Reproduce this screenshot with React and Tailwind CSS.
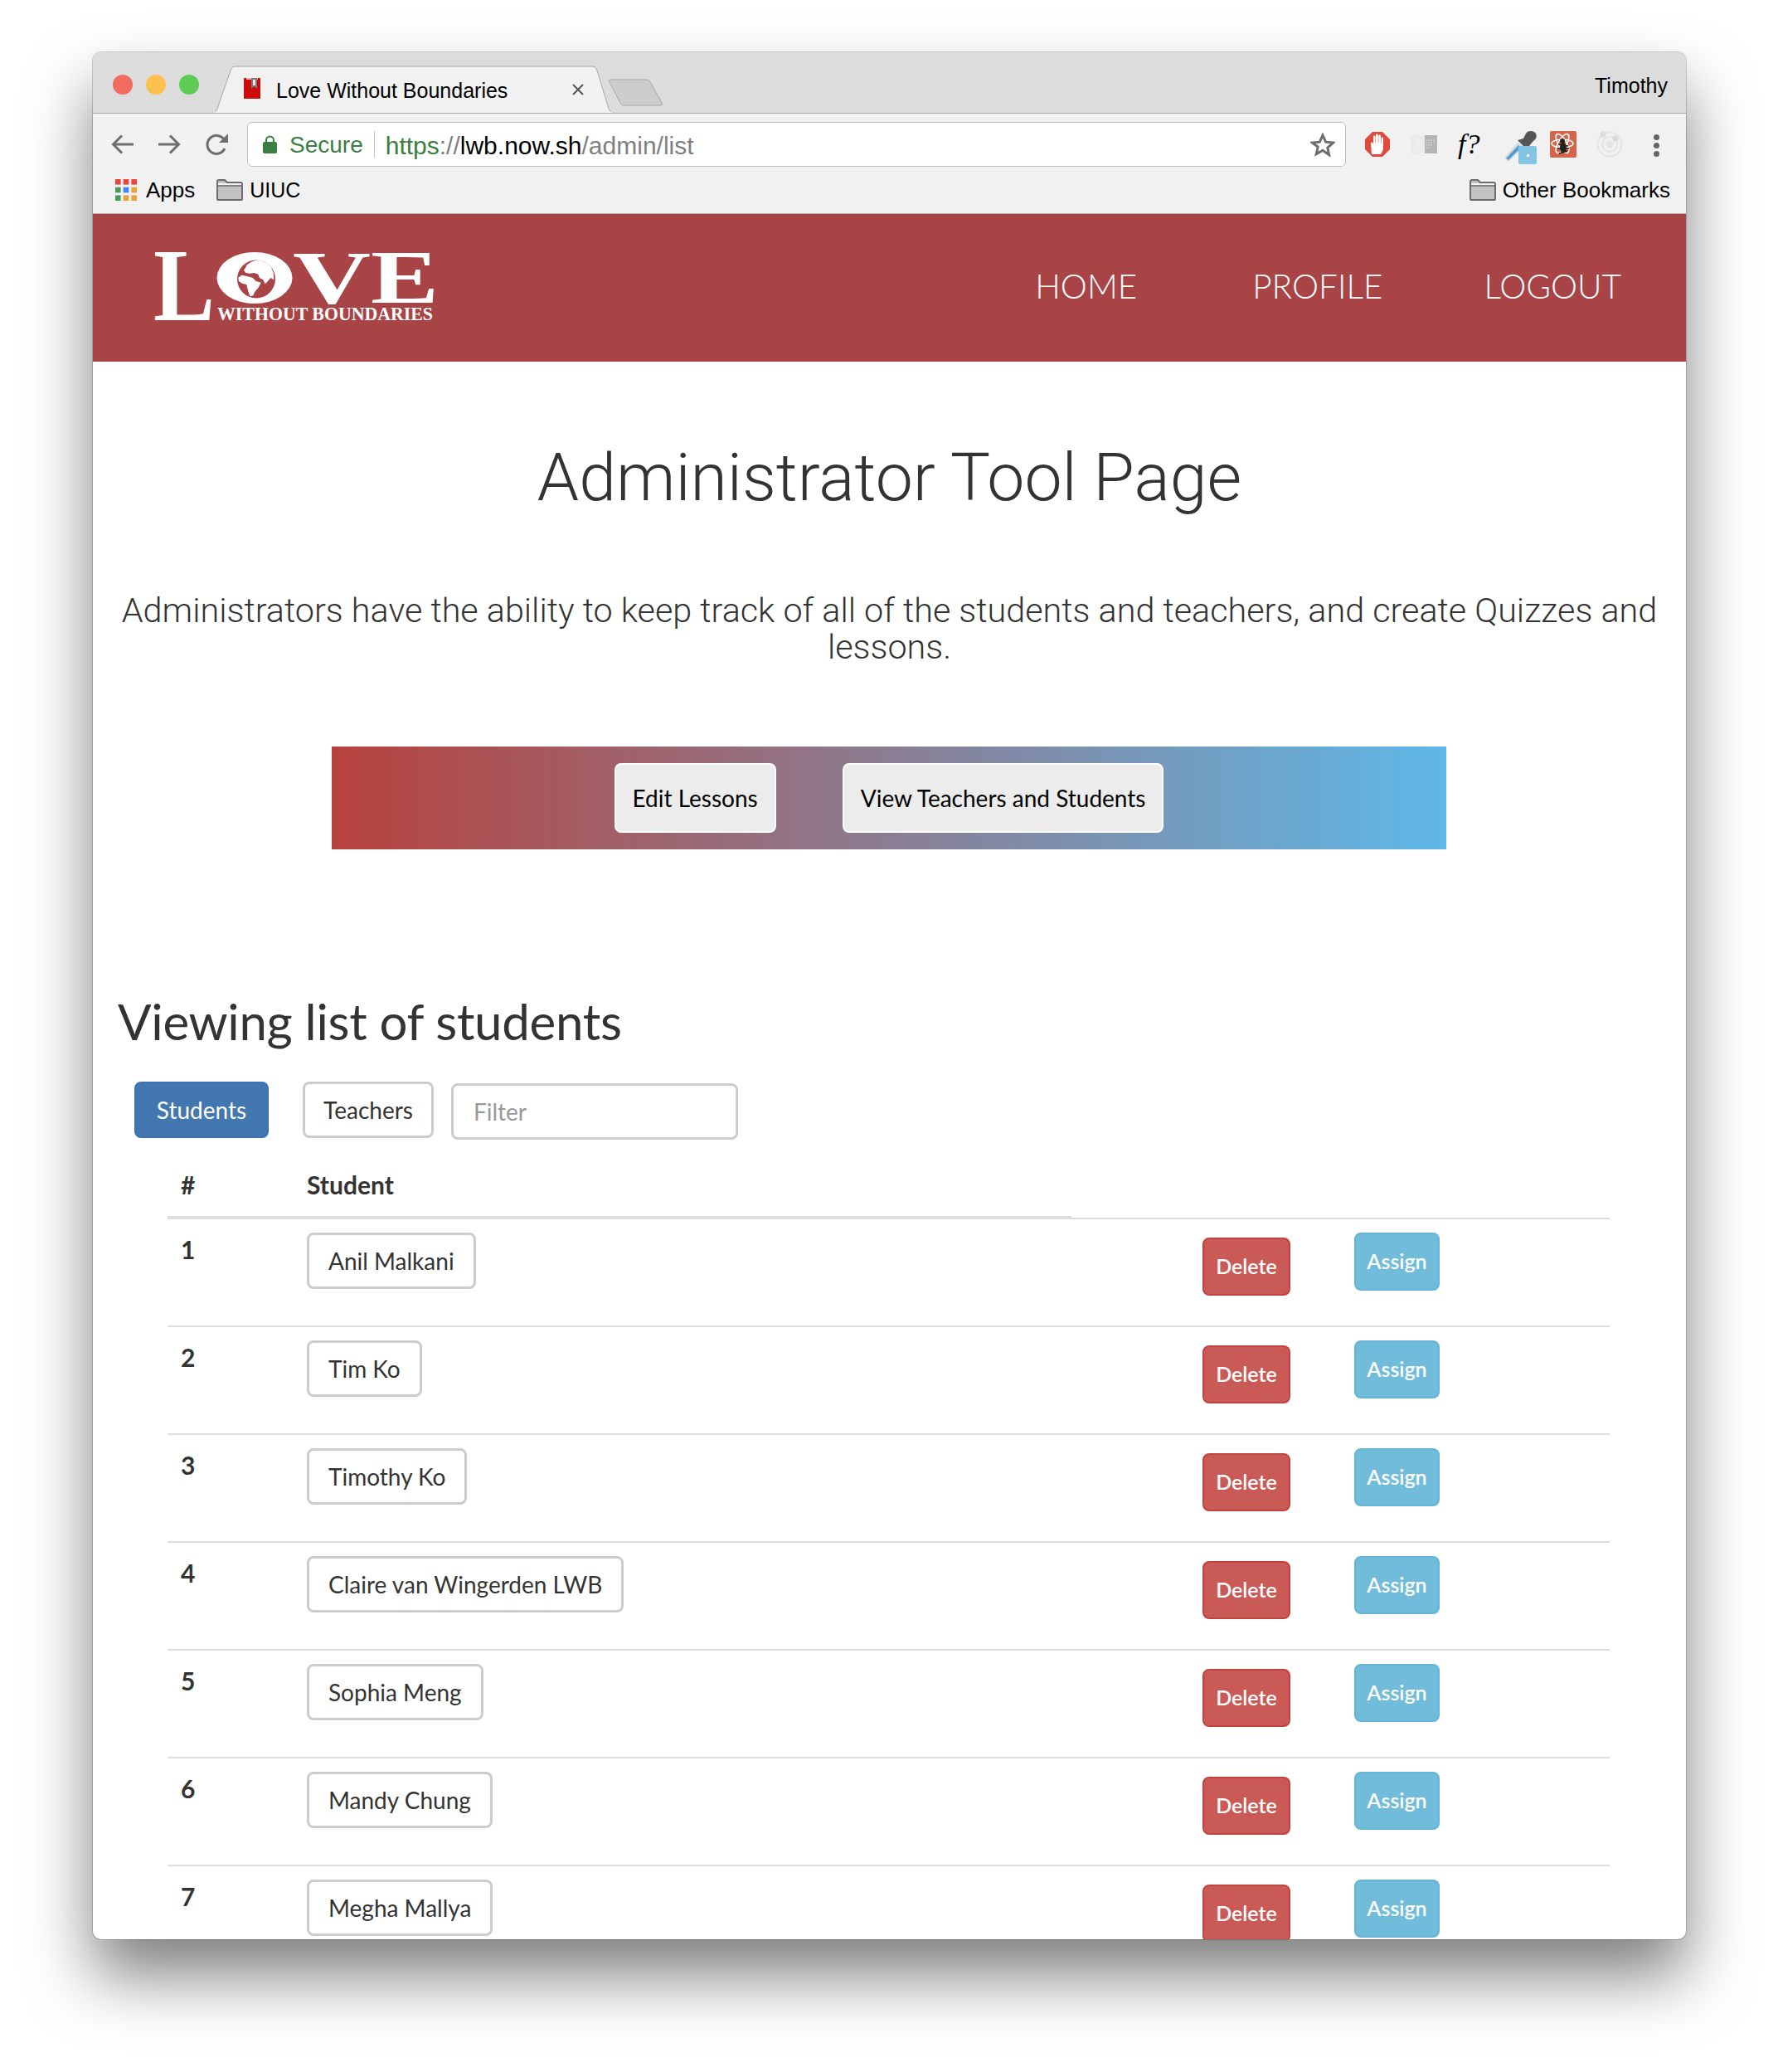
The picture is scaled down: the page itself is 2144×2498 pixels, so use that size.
import React from 'react';

const sans = "font-['Liberation_Sans',Arial,sans-serif]";

const students = [
    'Anil Malkani',
    'Tim Ko',
    'Timothy Ko',
    'Claire van Wingerden LWB',
    'Sophia Meng',
    'Mandy Chung',
    'Megha Mallya',
];

const FolderIcon = () => (
    <svg width="32" height="26" viewBox="0 0 32 26" className="shrink-0">
        <path d="M1 24V3a2 2 0 0 1 2-2h7l3 3h16a2 2 0 0 1 2 2v18a1 1 0 0 1-1 1H2a1 1 0 0 1-1-1z" fill="#c2c2c2" stroke="#6b6b6b" strokeWidth="2" />
        <path d="M1 8h30" stroke="#6b6b6b" strokeWidth="1.5" />
        <path d="M2 5h28v2H2z" fill="#f4f4f4" />
    </svg>
);

const AppsIcon = () => {
    const colors = ['#e8453c', '#e8453c', '#e8453c', '#4c9a5b', '#4285f4', '#e8a33d', '#4c9a5b', '#e8a33d', '#e8a33d'];
    return (
        <svg width="26" height="26" viewBox="0 0 26 26" className="shrink-0">
            {colors.map((c, i) => (
                <rect key={i} x={(i % 3) * 9.7} y={Math.floor(i / 3) * 9.7} width="6.6" height="6.6" fill={c} />
            ))}
        </svg>
    );
};

const AbpIcon = () => (
    <svg width="30" height="30" viewBox="0 0 30 30" className="shrink-0">
        <path d="M9 0h12l9 9v12l-9 9H9l-9-9V9z" fill="#e2483c" />
        <path d="M8 27l-1-13c0-2 2-2 2.500-.5L10 15V6c0-2 2.500-2 2.500 0v7h.5V4c0-2 2.800-2 2.800 0v9h.5V5c0-2 2.700-2 2.700 0v9h.5V8c0-2 2.500-2 2.500 0v11c0 4-2 6-3 8z" fill="#fff" />
    </svg>
);

const BinaryIcon = () => (
    <svg width="32" height="22" viewBox="0 0 32 22" className="shrink-0">
        <rect width="17" height="22" fill="#ebebeb" />
        <rect x="17" width="15" height="22" fill="#b4b4b4" />
        <path d="M6 6h9M6 9h9M6 12h9M6 15h7" stroke="#f8f8f8" strokeWidth="1" strokeDasharray="2 1" />
        <path d="M18 6h11M18 9h11M18 12h8M18 15h6" stroke="#d8d8d8" strokeWidth="1" strokeDasharray="2 1" />
    </svg>
);

const DropperIcon = () => (
    <svg width="40" height="40" viewBox="0 0 40 40" className="shrink-0">
        <path d="M1 32L18 13l6 6L6 37z" fill="#d8dce0" />
        <path d="M3 33L18 17l3 3L6 35z" fill="#4e9fd0" />
        <path d="M17 11l7-2 3-6c2-4 10-4 12 0 2 4 0 7-4 10l-4 5-1 6z" fill="#555" />
        <rect x="18" y="18" width="22" height="22" rx="2" fill="#84c4e4" />
        <rect x="28" y="28" width="3" height="3" fill="#fff" />
    </svg>
);

const ReactBugIcon = () => (
    <svg width="32" height="32" viewBox="0 0 32 32" className="shrink-0">
        <rect width="32" height="32" rx="2" fill="#d4654a" />
        <g fill="none" stroke="#fff" strokeWidth="1.500">
            <ellipse cx="15" cy="15" rx="13" ry="5" />
            <ellipse cx="15" cy="15" rx="13" ry="5" transform="rotate(60 15 15)" />
            <ellipse cx="15" cy="15" rx="13" ry="5" transform="rotate(120 15 15)" />
        </g>
        <circle cx="15" cy="12" r="3" fill="#222" />
        <ellipse cx="16" cy="20" rx="4" ry="6" fill="#222" />
        <path d="M10 16l12 2M9 21l14 0M11 27l10-3" stroke="#222" strokeWidth="1.500" />
    </svg>
);

const RingIcon = () => (
    <svg width="32" height="32" viewBox="0 0 32 32" className="shrink-0">
        <circle cx="16" cy="16" r="14.500" fill="none" stroke="#e4e4e4" strokeWidth="2" />
        <circle cx="16" cy="16" r="9" fill="none" stroke="#e4e4e4" strokeWidth="2" />
        <circle cx="16" cy="16" r="4.500" fill="#e4e4e4" />
        <circle cx="8" cy="4" r="3.500" fill="#dcdcdc" />
        <circle cx="23" cy="9" r="3.500" fill="#d8d8d8" />
    </svg>
);

const Logo = () => (
    <svg width="336" height="86" viewBox="0 0 336 86" className="shrink-0 overflow-visible">
        <defs>
            <clipPath id="globe"><circle cx="122" cy="32.500" r="23" /></clipPath>
        </defs>
        <g fill="#fff" fontFamily="'Liberation Serif', serif" fontWeight="700">
            <text x="-2" y="82" fontSize="124" textLength="74" lengthAdjust="spacingAndGlyphs">L</text>
            <text x="166" y="62" fontSize="92" textLength="94" lengthAdjust="spacingAndGlyphs">V</text>
            <text x="260" y="61" fontSize="90" textLength="82" lengthAdjust="spacingAndGlyphs">E</text>
            <text x="75" y="82" fontSize="23" textLength="260" lengthAdjust="spacingAndGlyphs">WITHOUT BOUNDARIES</text>
        </g>
        <ellipse cx="120" cy="31" rx="45.500" ry="31" fill="#fff" />
        <circle cx="122" cy="32.500" r="23" fill="#a84446" />
        <g clipPath="url(#globe)" fill="#fff">
            <path d="M111 15l5-3.300 8.300-2.700 8.400 2 6.600 5.700 3.400 8.300.6 8.300-4-2.300-3.300 4-3.300 3.300-2.400-5-4.300-2.300-1.700-4.300-5-1.700-5 .7-5-.7-2.300-3.300 2.300-3.400z" />
            <path d="M100.300 31l4-3.300 6.700 1.300 6.700 2 4 4 6 1.700-3.400 6.600-4 4.400-2 4.600-4 1-2.600-8.300-1.400-6-5.300-1.300-4-2.700z" />
        </g>
    </svg>
);

const App = () => {
    return (
        <div className="h-[2498px] w-full overflow-hidden bg-white pt-[63px] pl-[112px]">
            <div className="flex h-[2275px] w-[1921px] flex-col overflow-hidden rounded-[10px] bg-white shadow-[0_0_0_1px_rgba(0,0,0,0.18),0_44px_78px_rgba(0,0,0,0.5)]">
                {/* Tab strip */}
                <div className={`flex h-[74px] shrink-0 items-end border-b border-[#a8a8a8] bg-[#dcdcdc] ${sans}`}>
                    <div className="flex gap-[16px] self-start pt-[27px] pl-[24px]">
                        <span className="h-[24px] w-[24px] rounded-full bg-[#f26d60]" />
                        <span className="h-[24px] w-[24px] rounded-full bg-[#fbc04e]" />
                        <span className="h-[24px] w-[24px] rounded-full bg-[#5ecb55]" />
                    </div>
                    <div className="relative ml-[16px] flex h-[57px] w-[484px] items-center pl-[38px]">
                        <svg width="484" height="57" viewBox="0 0 484 57" className="absolute inset-0">
                            <path d="M0 57c3 0 5-2 6-5L22 6c1-3 3-5 6-5h430c3 0 5 2 6 5l14 46c1 3 3 5 6 5z" fill="#f1f1f1" stroke="#a8a8a8" strokeWidth="1" />
                            <path d="M1 57h482" stroke="#f1f1f1" strokeWidth="2" />
                        </svg>
                        <svg width="21" height="26" viewBox="0 0 21 26" className="relative mt-[-2px] shrink-0">
                            <rect width="20" height="25" rx="1" fill="#cc0c0c" />
                            <rect x="3" y="0" width="14" height="2" fill="#f0b0b0" />
                            <path d="M9 0h7v13l-3.500-3L9 13z" fill="#7a7a7a" />
                            <path d="M11 2h3v7h-3z" fill="#e8e8e8" />
                        </svg>
                        <span className="relative ml-[18px] mt-[4px] text-[25px] leading-none text-black">Love Without Boundaries</span>
                        <svg width="14" height="14" viewBox="0 0 14 14" className="relative ml-[78px] shrink-0">
                            <path d="M1 1l12 12M13 1L1 13" stroke="#555" strokeWidth="2" />
                        </svg>
                    </div>
                    <svg width="66" height="33" viewBox="0 0 66 33" className="mb-[8px] ml-[-6px] shrink-0">
                        <path d="M2 1h44c2 0 3 1 4 3l14 25c1 2 0 3-2 3H18c-2 0-3-1-4-3L1 4C0 2 0 1 2 1z" fill="#cdcdcd" stroke="#a6a6a6" strokeWidth="1" />
                    </svg>
                    <span className="mb-[20px] ml-auto pr-[22px] text-[25px] leading-none text-black">Timothy</span>
                </div>

                {/* Toolbar */}
                <div className={`flex h-[71px] shrink-0 items-start bg-[#f1f1f1] pt-[10px] pl-[22px] ${sans}`}>
                    <div className="mt-[15px] flex gap-[30px]">
                        <svg width="27" height="24" viewBox="0 0 27 24" fill="none" stroke="#6e6e6e" strokeWidth="3">
                            <path d="M27 12H3M13 1.500L2.500 12 13 22.500" />
                        </svg>
                        <svg width="27" height="24" viewBox="0 0 27 24" fill="none" stroke="#6e6e6e" strokeWidth="3">
                            <path d="M0 12h24M14 1.500L24.500 12 14 22.500" />
                        </svg>
                        <svg width="27" height="26" viewBox="0 0 27 26" fill="none" className="mt-[-1px]">
                            <path d="M23 18a11 11 0 1 1 -1-11" stroke="#6e6e6e" strokeWidth="3" />
                            <path d="M27 0v11H16z" fill="#6e6e6e" />
                        </svg>
                    </div>
                    <div className="ml-[23px] flex h-[54px] w-[1325px] shrink-0 items-center rounded-[6px] border border-[#bdbdbd] bg-white pl-[18px] pr-[12px] text-[28px]">
                        <svg width="17" height="22" viewBox="0 0 17 22" className="shrink-0">
                            <path d="M4 9V6a4.500 4.500 0 0 1 9 0v3" fill="none" stroke="#3a7e41" strokeWidth="2" />
                            <rect y="8" width="17" height="14" rx="2" fill="#3a7e41" />
                        </svg>
                        <span className="ml-[15px] pt-[2px] text-[#3a7e41]">Secure</span>
                        <span className="ml-[13px] h-[32px] w-px bg-[#c4c4c4]" />
                        <span className="ml-[13px] pt-[2px] text-[30px]">
                            <span className="text-[#3a7e41]">https</span>
                            <span className="text-[#808080]">://</span>
                            <span className="text-black">lwb.now.sh</span>
                            <span className="text-[#808080]">/admin/list</span>
                        </span>
                        <svg width="30" height="29" viewBox="0 0 30 29" className="ml-auto shrink-0">
                            <path d="M15 3l3.600 8.200 8.900.9-6.700 5.900 1.900 8.800L15 21.300 7.300 25.800l1.900-8.800L2.500 12.100l8.900-.9z" fill="none" stroke="#6e6e6e" strokeWidth="3" />
                        </svg>
                    </div>
                    <div className="mt-[12px] flex items-start">
                        <div className="ml-[23px]"><AbpIcon /></div>
                        <div className="ml-[25px] mt-[4px]"><BinaryIcon /></div>
                        <span className="ml-[25px] w-[32px] font-['Liberation_Serif',serif] text-[34px] leading-[30px] italic text-black">f?</span>
                        <div className="ml-[23px] mt-[-1px]"><DropperIcon /></div>
                        <div className="ml-[16px] mt-[-1px]"><ReactBugIcon /></div>
                        <div className="ml-[24px] mt-[-1px]"><RingIcon /></div>
                        <div className="ml-[37px] mt-[3px] flex flex-col gap-[3px]">
                            <span className="h-[7px] w-[7px] rounded-full bg-[#666]" />
                            <span className="h-[7px] w-[7px] rounded-full bg-[#666]" />
                            <span className="h-[7px] w-[7px] rounded-full bg-[#666]" />
                        </div>
                    </div>
                </div>

                {/* Bookmarks */}
                <div className={`flex h-[50px] shrink-0 items-center border-b border-[#b4b4b4] bg-[#f1f1f1] pb-[7px] pl-[27px] pr-[19px] text-[26px] leading-none text-black ${sans}`}>
                    <AppsIcon />
                    <span className="ml-[11px]">Apps</span>
                    <div className="ml-[26px]"><FolderIcon /></div>
                    <span className="ml-[8px] text-[25px]">UIUC</span>
                    <div className="ml-auto"><FolderIcon /></div>
                    <span className="ml-[8px]">Other Bookmarks</span>
                </div>

                {/* Navbar */}
                <div className="flex h-[178px] shrink-0 items-center justify-between bg-[#a84446] pl-[75px] pr-[78px] font-['Lato',sans-serif] text-white">
                    <Logo />
                    <div className="flex pb-[4px] text-[40.500px] font-light leading-none">
                        <span>HOME</span>
                        <span className="ml-[139px]">PROFILE</span>
                        <span className="ml-[122px]">LOGOUT</span>
                    </div>
                </div>

                {/* Page */}
                <div className="flex flex-1 flex-col font-['Lato',sans-serif] text-[#333]">
                    <h1 className="mt-[96px] text-center font-['Roboto',sans-serif] text-[80.600px] font-light leading-[88px]">Administrator Tool Page</h1>
                    <p className="mt-[94px] text-center font-['Roboto',sans-serif] text-[41.300px] font-light leading-[44px]">
                        Administrators have the ability to keep track of all of the students and teachers, and create Quizzes and<br />lessons.
                    </p>

                    <div className="ml-[288px] mt-[98px] flex h-[124px] w-[1344px] items-center justify-center gap-[80px] bg-[linear-gradient(to_right,#b7423d,#5eb8e8)] text-[28px] text-black">
                        <button className="h-[84px] rounded-[8px] border-2 border-white bg-[#ececec] px-[20px]">Edit Lessons</button>
                        <button className="h-[84px] rounded-[8px] border-2 border-white bg-[#ececec] px-[20px]">View Teachers and Students</button>
                    </div>

                    <h2 className="ml-[30px] mt-[174px] text-[60px] leading-[66px] tracking-[-0.3px]">Viewing list of students</h2>

                    <div className="ml-[50px] mt-[40px] flex items-start text-[28px]">
                        <button className="h-[68px] w-[162px] rounded-[8px] border-2 border-[#3d72ac] bg-[#4277b0] text-white">Students</button>
                        <button className="ml-[41px] h-[68px] w-[158px] rounded-[8px] border-[3px] border-[#ccc] bg-white">Teachers</button>
                        <input
                            placeholder="Filter"
                            className="ml-[21px] mt-[2px] h-[68px] w-[346px] rounded-[8px] border-[3px] border-[#ccc] bg-white px-[24px] text-[28px] placeholder:text-[#999]"
                        />
                    </div>

                    {/* Table */}
                    <div className="ml-[90px] w-[1739px]">
                        <div className="relative z-10 mb-[-2px] flex h-[96px] w-[1090px] items-center border-b-4 border-[#ddd] pt-[16px] text-[30px] font-bold">
                            <span className="w-[168px] pl-[16px]">#</span>
                            <span>Student</span>
                        </div>
                        {students.map((name, i) => (
                            <div key={name} className="flex h-[130px] items-start border-t-2 border-[#ddd]">
                                <span className="mt-[15px] w-[168px] pl-[16px] text-[30px] font-bold leading-[42px]">{i + 1}</span>
                                <div className="w-[1080px] pt-[16px]">
                                    <button className="h-[68px] rounded-[8px] border-[3px] border-[#ccc] bg-white px-[23px] text-[28px]">{name}</button>
                                </div>
                                <button className="mt-[22px] h-[70px] w-[106px] rounded-[8px] border-2 border-[#c4433f] bg-[#ca5a56] text-[25px] font-semibold text-white">Delete</button>
                                <button className="ml-[77px] mt-[16px] h-[70px] w-[103px] rounded-[8px] border-2 border-[#65b5d6] bg-[#72bcdb] text-[25px] font-semibold text-white">Assign</button>
                            </div>
                        ))}
                    </div>
                </div>
            </div>
        </div>
    );
};

export default App;
